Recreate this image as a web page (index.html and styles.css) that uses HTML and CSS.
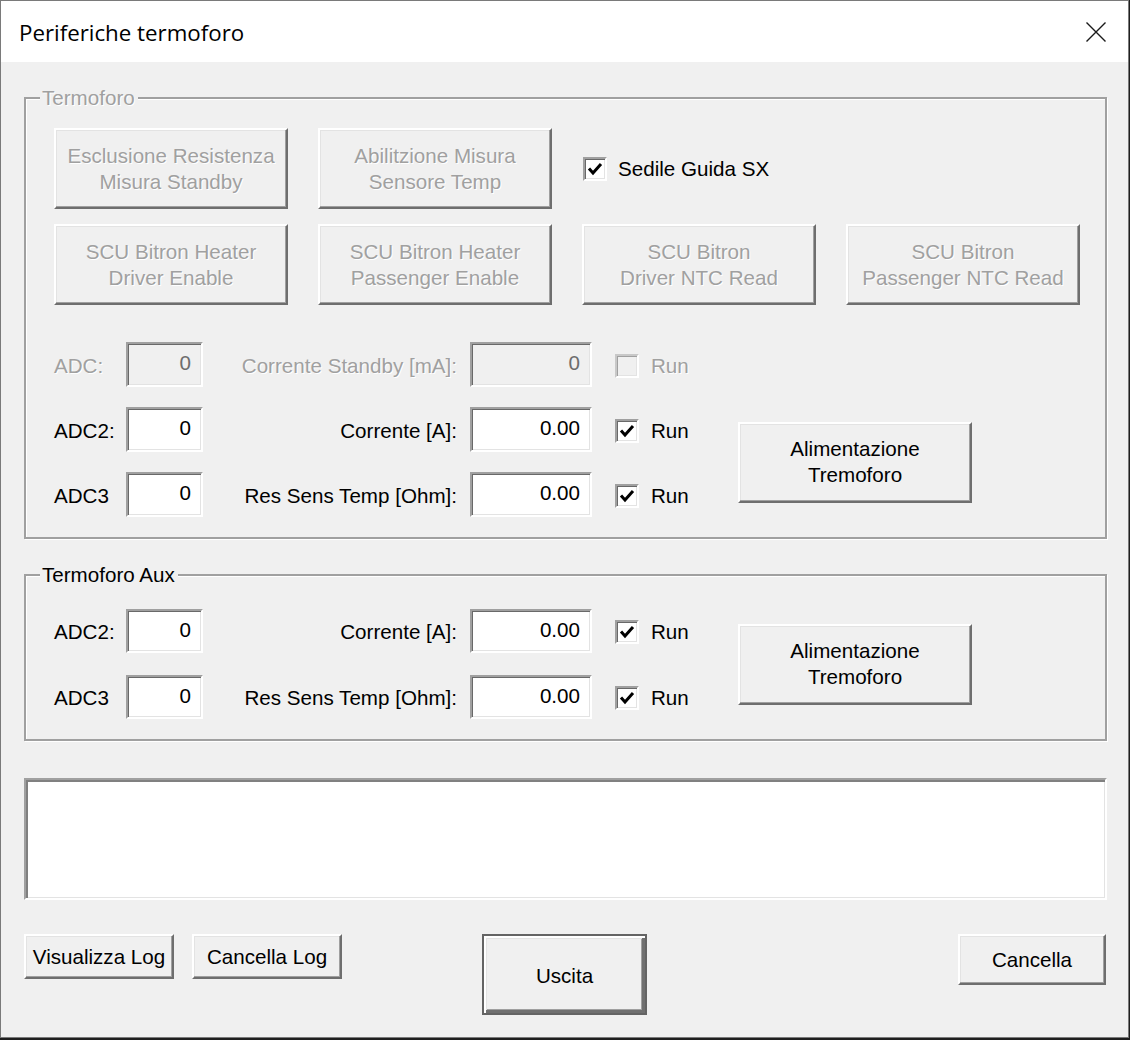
FILE: index.html
```html
<!DOCTYPE html>
<html>
<head>
<meta charset="utf-8">
<title>Periferiche termoforo</title>
<link rel="stylesheet" href="styles.css">
</head>
<body>
<div class="window">
  <div class="titlebar">
    <span class="title">Periferiche termoforo</span>
    <svg class="close" width="20" height="20" viewBox="0 0 20 20"><path d="M0.5 0.5 L19.5 19.5 M19.5 0.5 L0.5 19.5" stroke="#1a1a1a" stroke-width="1.4" fill="none"/></svg>
  </div>
  <div class="content">
    <div class="group g1">
      <span class="group-label disabled">Termoforo</span>
      <div class="btn-row row1">
        <div class="btn big disabled">Esclusione Resistenza<br>Misura Standby</div>
        <div class="btn big disabled">Abilitzione Misura<br>Sensore Temp</div>
        <div class="check sedile">
          <span class="cb"><svg viewBox="0 0 20 20" width="20" height="20"><polyline points="4,9.5 8,14 16,5" fill="none" stroke="#000" stroke-width="3"/></svg></span>
          <span>Sedile Guida SX</span>
        </div>
      </div>
      <div class="btn-row row2">
        <div class="btn big disabled">SCU Bitron Heater<br>Driver Enable</div>
        <div class="btn big disabled">SCU Bitron Heater<br>Passenger Enable</div>
        <div class="btn big disabled">SCU Bitron<br>Driver NTC Read</div>
        <div class="btn big disabled">SCU Bitron<br>Passenger NTC Read</div>
      </div>
      <div class="form f1">
        <span class="lbl disabled">ADC:</span>
        <span class="edit sunken off">0</span>
        <span class="lbl2 disabled">Corrente Standby [mA]:</span>
        <span class="edit sunken off">0</span>
        <span class="check run"><span class="cb off"></span><span class="disabled">Run</span></span>
        <span></span>

        <span class="lbl">ADC2:</span>
        <span class="edit sunken">0</span>
        <span class="lbl2">Corrente [A]:</span>
        <span class="edit sunken">0.00</span>
        <span class="check run"><span class="cb"><svg viewBox="0 0 20 20" width="20" height="20"><polyline points="4,9.5 8,14 16,5" fill="none" stroke="#000" stroke-width="3"/></svg></span><span>Run</span></span>
        <div class="btn alim">Alimentazione<br>Tremoforo</div>

        <span class="lbl">ADC3</span>
        <span class="edit sunken">0</span>
        <span class="lbl2">Res Sens Temp [Ohm]:</span>
        <span class="edit sunken">0.00</span>
        <span class="check run"><span class="cb"><svg viewBox="0 0 20 20" width="20" height="20"><polyline points="4,9.5 8,14 16,5" fill="none" stroke="#000" stroke-width="3"/></svg></span><span>Run</span></span>
      </div>
    </div>

    <div class="group g2">
      <span class="group-label">Termoforo Aux</span>
      <div class="form f2">
        <span class="lbl">ADC2:</span>
        <span class="edit sunken">0</span>
        <span class="lbl2">Corrente [A]:</span>
        <span class="edit sunken">0.00</span>
        <span class="check run"><span class="cb"><svg viewBox="0 0 20 20" width="20" height="20"><polyline points="4,9.5 8,14 16,5" fill="none" stroke="#000" stroke-width="3"/></svg></span><span>Run</span></span>
        <div class="btn alim">Alimentazione<br>Tremoforo</div>

        <span class="lbl">ADC3</span>
        <span class="edit sunken">0</span>
        <span class="lbl2">Res Sens Temp [Ohm]:</span>
        <span class="edit sunken">0.00</span>
        <span class="check run"><span class="cb"><svg viewBox="0 0 20 20" width="20" height="20"><polyline points="4,9.5 8,14 16,5" fill="none" stroke="#000" stroke-width="3"/></svg></span><span>Run</span></span>
      </div>
    </div>

    <div class="logbox sunken"></div>

    <div class="bottom">
      <div class="btn small">Visualizza Log</div>
      <div class="btn small clog">Cancella Log</div>
      <div class="btn default">Uscita</div>
      <div class="btn cancel">Cancella</div>
    </div>
  </div>
</div>
</body>
</html>
```

FILE: styles.css
```css
html, body {
  margin: 0;
  padding: 0;
  background: #1f1f1f;
}
.window {
  box-sizing: border-box;
  width: 1129px;
  height: 1038px;
  border: 1px solid #7a7a7a;
  background: #f0f0f0;
  font-family: "Liberation Sans", Arial, sans-serif;
  font-size: 20.6px;
  color: #000;
  display: flex;
  flex-direction: column;
}
.titlebar {
  height: 61px;
  flex: none;
  background: #fff;
  display: flex;
  align-items: center;
  justify-content: space-between;
  padding: 0 22px 0 18px;
}
.title {
  font-family: "Open Sans", "Noto Sans", sans-serif;
  font-size: 22.3px;
  color: #000;
  position: relative;
  top: 1px;
}
.close { display: block; }
.content {
  padding: 35px 21px 0 23px;
  display: flex;
  flex-direction: column;
}
.disabled {
  color: #a0a0a0;
  text-shadow: 1px 1px 0 #fff;
}
.group {
  position: relative;
  box-sizing: border-box;
  border: 2px solid #a0a0a0;
  box-shadow: 1px 1px 0 #fff, inset 1px 1px 0 #fff;
}
.group-label {
  position: absolute;
  top: -13px;
  left: 14px;
  padding: 0 3px 0 2px;
  background: #f0f0f0;
  line-height: 24px;
}
.g1 {
  height: 442px;
  padding: 29px 0 0 28px;
}
.g2 {
  height: 167px;
  margin-top: 35px;
  padding: 33px 0 0 28px;
}
.btn-row {
  display: flex;
  align-items: center;
  gap: 30px;
}
.row2 { margin-top: 15px; }
.btn {
  box-sizing: border-box;
  display: flex;
  align-items: center;
  justify-content: center;
  text-align: center;
  background: #f0f0f0;
  border: 2px solid;
  border-color: #fff #6e6e6e #6e6e6e #fff;
  box-shadow: inset -1px -1px 0 #a0a0a0, inset 1px 1px 0 #e3e3e3;
  line-height: 26px;
}
.big, .alim {
  width: 234px;
  height: 81px;
}
.check {
  display: flex;
  align-items: center;
}
.sedile {
  margin-left: 1px;
  gap: 11px;
}
.cb {
  box-sizing: border-box;
  width: 24px;
  height: 24px;
  border: 2px solid;
  border-color: #a0a0a0 #fff #fff #a0a0a0;
  box-shadow: inset 1px 1px 0 #696969, inset -1px -1px 0 #e3e3e3;
  background: #fff;
  display: flex;
  align-items: center;
  justify-content: center;
}
.cb svg { display: block; }
.cb.off {
  background: #f0f0f0;
  border-color: #c8c8c8 #fff #fff #c8c8c8;
  box-shadow: inset 1px 1px 0 #a0a0a0, inset -1px -1px 0 #e3e3e3;
}
.form {
  display: grid;
  grid-template-columns: 72px 77px 267px 122px 146px 234px;
  align-items: center;
}
.f1 {
  margin-top: 37px;
  grid-template-rows: 45px 45px 45px;
  row-gap: 20px;
}
.f2 {
  grid-template-rows: 44px 44px;
  row-gap: 22px;
}
.lbl { padding-top: 2px; }
.lbl2 {
  text-align: right;
  padding-right: 13px;
  padding-top: 2px;
  white-space: nowrap;
}
.sunken {
  box-sizing: border-box;
  border: 2px solid;
  border-color: #a0a0a0 #fff #fff #a0a0a0;
  box-shadow: inset 1px 1px 0 #696969, inset -1px -1px 0 #e3e3e3;
  background: #fff;
}
.edit {
  height: 100%;
  display: flex;
  align-items: center;
  justify-content: flex-end;
  padding: 0 10px 3px 0;
}
.edit.off {
  background: #f0f0f0;
  color: #6d6d6d;
}
.run {
  padding-left: 23px;
  gap: 12px;
  padding-top: 2px;
}
.alim {
  grid-column: 6;
  grid-row: span 2;
  align-self: center;
}
.logbox {
  margin-top: 37px;
  height: 122px;
  box-shadow: inset 2px 2px 0 #808080, inset -1px -1px 0 #e3e3e3;
}
.bottom {
  margin-top: 34px;
  display: flex;
  align-items: flex-start;
}
.small {
  width: 150px;
  height: 45px;
}
.clog { margin-left: 18px; }
.default {
  margin-left: 140px;
  width: 165px;
  height: 81px;
  border: 2px solid #646464;
  box-shadow: inset 2px 2px 0 #fff, inset -3px -3px 0 #707070, inset 3px 3px 0 #e3e3e3, inset -4px -4px 0 #a0a0a0;
  padding-top: 2px;
}
.cancel {
  margin-left: auto;
  margin-right: 1px;
  width: 148px;
  height: 51px;
}
```
